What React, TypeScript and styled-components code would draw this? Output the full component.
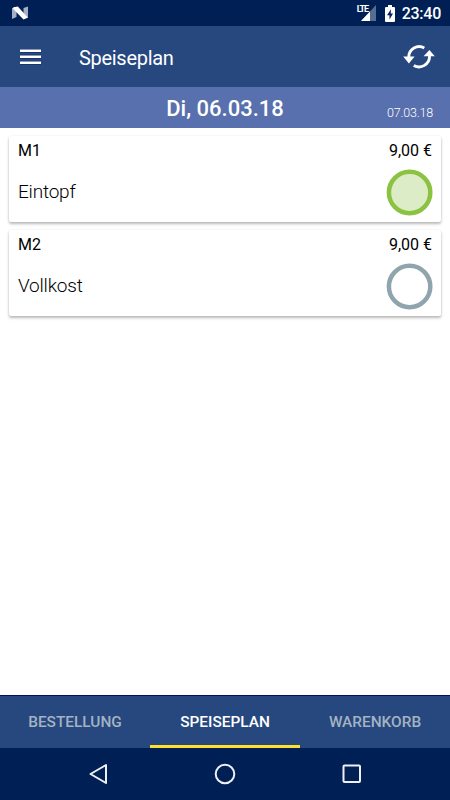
import React from 'react';
import styled, { createGlobalStyle } from 'styled-components';

const GlobalStyle = createGlobalStyle`
  * { box-sizing: border-box; }
  body { margin: 0; background: #fff; font-family: Roboto, "Liberation Sans", sans-serif; }
  svg { display: block; flex: none; }
`;

const Screen = styled.div`
  width: 450px;
  height: 800px;
  display: flex;
  flex-direction: column;
  background: #fff;
  overflow: hidden;
`;

const StatusBar = styled.div`
  height: 26px;
  flex: none;
  display: flex;
  align-items: center;
  justify-content: space-between;
  padding: 0 9px 0 11px;
  background: #001f54;
  color: #fff;
`;

const StatusIcons = styled.div`
  display: flex;
  align-items: center;
  height: 26px;
`;

const Network = styled.span`
  align-self: flex-start;
  width: 11px;
  margin: 4px -7px 0 0;
  font-size: 9px;
  line-height: 10px;
  font-weight: 700;
  letter-spacing: -1.1px;
`;

const Clock = styled.span`
  margin: 2px 0 0 7px;
  font-size: 16px;
  line-height: 20px;
  font-weight: 500;
  letter-spacing: -0.25px;
`;

const Toolbar = styled.header`
  height: 61px;
  flex: none;
  display: flex;
  align-items: center;
  padding: 1px 15px 0 20px;
  background: #27477f;
  color: #fff;
`;

const IconButton = styled.button`
  padding: 0;
  border: 0;
  background: none;
  color: inherit;
`;

const Title = styled.h1`
  flex: 1;
  margin: 2px 0 0 38px;
  font-size: 20px;
  line-height: 24px;
  font-weight: 400;
  letter-spacing: -0.3px;
`;

const DateBar = styled.div`
  height: 41px;
  flex: none;
  display: grid;
  grid-template-columns: 1fr auto 1fr;
  align-items: center;
  padding: 2px 17px 0;
  background: #5870ad;
  color: #fff;
`;

const CurrentDate = styled.span`
  grid-column: 2;
  font-size: 22px;
  line-height: 26px;
  font-weight: 500;
`;

const NextDate = styled.span`
  justify-self: end;
  margin-top: 8px;
  font-size: 12.5px;
  line-height: 16px;
  font-weight: 300;
  letter-spacing: -0.2px;
`;

const Menu = styled.main`
  flex: 1;
  display: flex;
  flex-direction: column;
  gap: 8px;
  padding: 8px 9px;
`;

const Card = styled.article`
  height: 86px;
  display: flex;
  justify-content: space-between;
  padding: 5px 8px 0 9px;
  border-radius: 2px;
  background: #fff;
  box-shadow: 0 2px 3px rgba(0, 0, 0, 0.27), 0 0 2px rgba(0, 0, 0, 0.08);
  color: #000;
`;

const CardColumn = styled.div<{ $end?: boolean }>`
  display: flex;
  flex-direction: column;
  align-items: ${({ $end }) => ($end ? 'flex-end' : 'flex-start')};
`;

const Label = styled.span`
  font-size: 16px;
  line-height: 20px;
`;

const Price = styled(Label)`
  margin-right: 1px;
`;

const Dish = styled.span`
  margin-top: 19px;
  font-size: 19px;
  line-height: 24px;
  font-weight: 300;
  letter-spacing: -0.2px;
`;

const Marker = styled.svg<{ $selected: boolean }>`
  margin-top: 8px;
  stroke-width: 4.5px;
  stroke: ${({ $selected }) => ($selected ? '#8bc240' : '#90a4ae')};
  fill: ${({ $selected }) => ($selected ? '#dcecc7' : '#fff')};
`;

const Tabs = styled.nav`
  height: 53px;
  flex: none;
  display: grid;
  grid-template-columns: repeat(3, 1fr);
  background: #27477f;
  border-top: 1px solid #00125c;
`;

const Tab = styled.button<{ $active: boolean }>`
  padding: 2px 0 0;
  border: 0;
  border-bottom: 3px solid ${({ $active }) => ($active ? '#fde02f' : 'transparent')};
  background: none;
  color: ${({ $active }) => ($active ? '#fff' : '#a3b3c1')};
  font: 500 15.4px/20px Roboto, sans-serif;
`;

const SystemNav = styled.div`
  height: 52px;
  flex: none;
  display: flex;
  justify-content: center;
  align-items: center;
  gap: 103px;
  background: #001f54;
`;

const meals = [
  { code: 'M1', dish: 'Eintopf', price: '9,00 €', selected: true },
  { code: 'M2', dish: 'Vollkost', price: '9,00 €', selected: false },
];

const tabs = ['BESTELLUNG', 'SPEISEPLAN', 'WARENKORB'];

const AndroidN = () => (
  <svg width="18" height="14" viewBox="0 0 18 14">
    <path d="M1 2.2 5.5 1v10L1 13zM12.5 2 17 .5v11.3L12.5 13z" fill="#a5b0c6" />
    <path d="M2.5 1.2 6.8.6 16.8 11.6 12.5 13.4 1.8 2.5z" fill="#fff" />
  </svg>
);

const Signal = () => (
  <svg width="15" height="16" viewBox="0 0 15 16">
    <path d="M15 0v16H0z" fill="#556e91" />
    <path d="M9 6.4V16H0z" fill="#fff" />
  </svg>
);

const Battery = () => (
  <svg width="10" height="17" viewBox="0 0 10 17">
    <path d="M3 0h4v2h2q1 0 1 1v13q0 1-1 1H1q-1 0-1-1V3q0-1 1-1h2z" fill="#fff" />
    <path d="M6 4.3 2 10.2h2.5V14.5L8 8.6H5.7z" fill="#001f54" />
  </svg>
);

const BatterySlot = styled.span`
  margin-left: 9px;
`;

const MenuIcon = () => (
  <svg width="21" height="16" viewBox="0 0 21 16">
    <path d="M0 1.8h21M0 7.8h21M0 13.8h21" stroke="#00125c" strokeWidth="4" opacity=".45" />
    <path d="M0 1.8h21M0 7.8h21M0 13.8h21" stroke="#fff" strokeWidth="2.5" />
  </svg>
);

const SyncIcon = () => (
  <svg width="32" height="26" viewBox="0 0 32 26">
    <g fill="none" stroke="#fff" strokeWidth="2.9">
      <path d="M5.8 13A10.4 10.4 0 0 1 21.3 4" />
      <path d="M26.5 12A10.4 10.4 0 0 1 10.8 21.4" />
    </g>
    <path d="M.2 12.5h11.4L5.9 19.4zM20.6 12.2h11.2L26.4 6z" fill="#fff" />
  </svg>
);

export default function App() {
  return (
    <Screen>
      <GlobalStyle />
      <StatusBar>
        <AndroidN />
        <StatusIcons>
          <Network>LTE</Network>
          <Signal />
          <BatterySlot><Battery /></BatterySlot>
          <Clock>23:40</Clock>
        </StatusIcons>
      </StatusBar>
      <Toolbar>
        <IconButton aria-label="Menü"><MenuIcon /></IconButton>
        <Title>Speiseplan</Title>
        <IconButton aria-label="Aktualisieren"><SyncIcon /></IconButton>
      </Toolbar>
      <DateBar>
        <CurrentDate>Di, 06.03.18</CurrentDate>
        <NextDate>07.03.18</NextDate>
      </DateBar>
      <Menu>
        {meals.map((meal) => (
          <Card key={meal.code}>
            <CardColumn>
              <Label>{meal.code}</Label>
              <Dish>{meal.dish}</Dish>
            </CardColumn>
            <CardColumn $end>
              <Price>{meal.price}</Price>
              <Marker $selected={meal.selected} width="47" height="47" viewBox="0 0 47 47">
                <circle cx="23.6" cy="23.5" r="20.7" />
              </Marker>
            </CardColumn>
          </Card>
        ))}
      </Menu>
      <Tabs>
        {tabs.map((tab) => (
          <Tab key={tab} $active={tab === 'SPEISEPLAN'}>{tab}</Tab>
        ))}
      </Tabs>
      <SystemNav>
        <svg width="24" height="24" viewBox="0 0 24 24">
          <path d="M20 3 4.5 12 20 21z" fill="none" stroke="#eef0f5" strokeWidth="2" strokeLinejoin="round" />
        </svg>
        <svg width="24" height="24" viewBox="0 0 24 24">
          <circle cx="12" cy="12" r="9.3" fill="none" stroke="#eef0f5" strokeWidth="2" />
        </svg>
        <svg width="24" height="24" viewBox="0 0 24 24">
          <rect x="3.5" y="3.5" width="16.5" height="16.5" rx="1" fill="none" stroke="#eef0f5" strokeWidth="2" />
        </svg>
      </SystemNav>
    </Screen>
  );
}
